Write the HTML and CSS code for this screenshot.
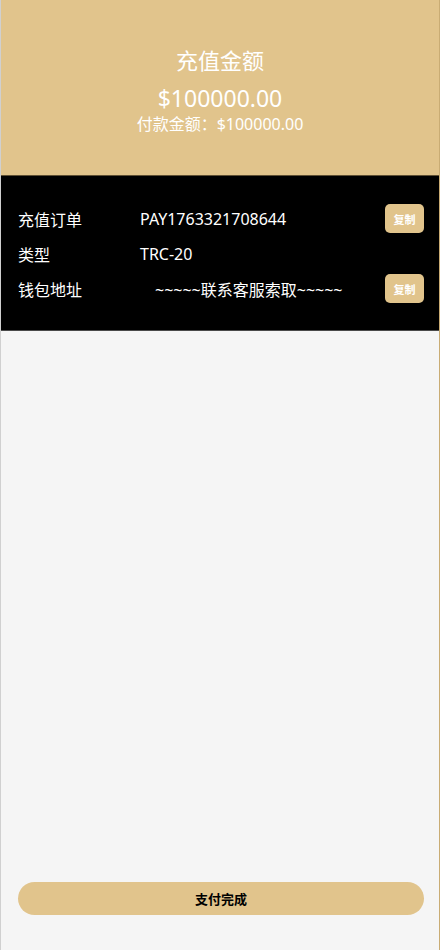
FILE: index.html
```html
<!DOCTYPE html>
<html lang="zh-CN">
<head>
<meta charset="utf-8">
<meta name="viewport" content="width=device-width, initial-scale=1">
<title>充值</title>
<link rel="stylesheet" href="styles.css">
</head>
<body>
<div class="page">
  <header class="header">
    <div class="title">充值金额</div>
    <div class="amount">$100000.00</div>
    <div class="sub">付款金额：$100000.00</div>
  </header>
  <section class="info">
    <div class="row">
      <span class="label">充值订单</span>
      <span class="value">PAY1763321708644</span>
      <button class="copy">复制</button>
    </div>
    <div class="row">
      <span class="label">类型</span>
      <span class="value">TRC-20</span>
    </div>
    <div class="row">
      <span class="label">钱包地址</span>
      <span class="value addr">~~~~~联系客服索取~~~~~</span>
      <button class="copy">复制</button>
    </div>
  </section>
  <div class="spacer"></div>
  <button class="done">支付完成</button>
</div>
</body>
</html>
```

FILE: styles.css
```css
* { box-sizing: border-box; }
html, body { margin: 0; padding: 0; }
body {
  background: #f5f5f5;
  font-family: "Noto Sans", "Noto Sans CJK SC", sans-serif;
}
.page {
  width: 440px;
  height: 950px;
  border-left: 1px solid #d0d0d0;
  border-right: 1px solid #c9ac74;
  display: flex;
  flex-direction: column;
  background: #f5f5f5;
}
.header {
  height: 176px;
  background: #e1c48c;
  border-bottom: 1px solid #5e4f33;
  color: #fff;
  display: flex;
  flex-direction: column;
  align-items: center;
  padding-top: 44px;
}
.title {
  font-size: 22px;
  line-height: 32px;
}
.amount {
  font-size: 23px;
  line-height: 28px;
  margin-top: 8px;
}
.sub {
  font-size: 16px;
  line-height: 20px;
  margin-top: 2px;
}
.info {
  background: #000;
  color: #fff;
  padding: 25px 15px 24px 17px;
  border-bottom: 1px solid #4a4a4a;
}
.row {
  height: 35px;
  display: flex;
  align-items: center;
  font-size: 16px;
}
.label {
  width: 122px;
  flex: none;
}
.value {
  flex: 1;
  color: #fff;
}
.addr {
  padding-left: 15px;
}
.copy {
  width: 39px;
  height: 29px;
  border: none;
  border-radius: 5px;
  background: #e1c48c;
  color: #fff;
  font-family: "Noto Sans CJK SC", sans-serif;
  font-size: 11px;
  font-weight: bold;
  padding: 0;
}
.spacer { flex: 1; }
.done {
  margin: 0 15px 35px 17px;
  height: 33px;
  border: none;
  border-radius: 17px;
  background: #e1c48c;
  color: #000;
  font-family: "Noto Sans CJK SC", sans-serif;
  font-size: 13px;
  font-weight: bold;
}
```
